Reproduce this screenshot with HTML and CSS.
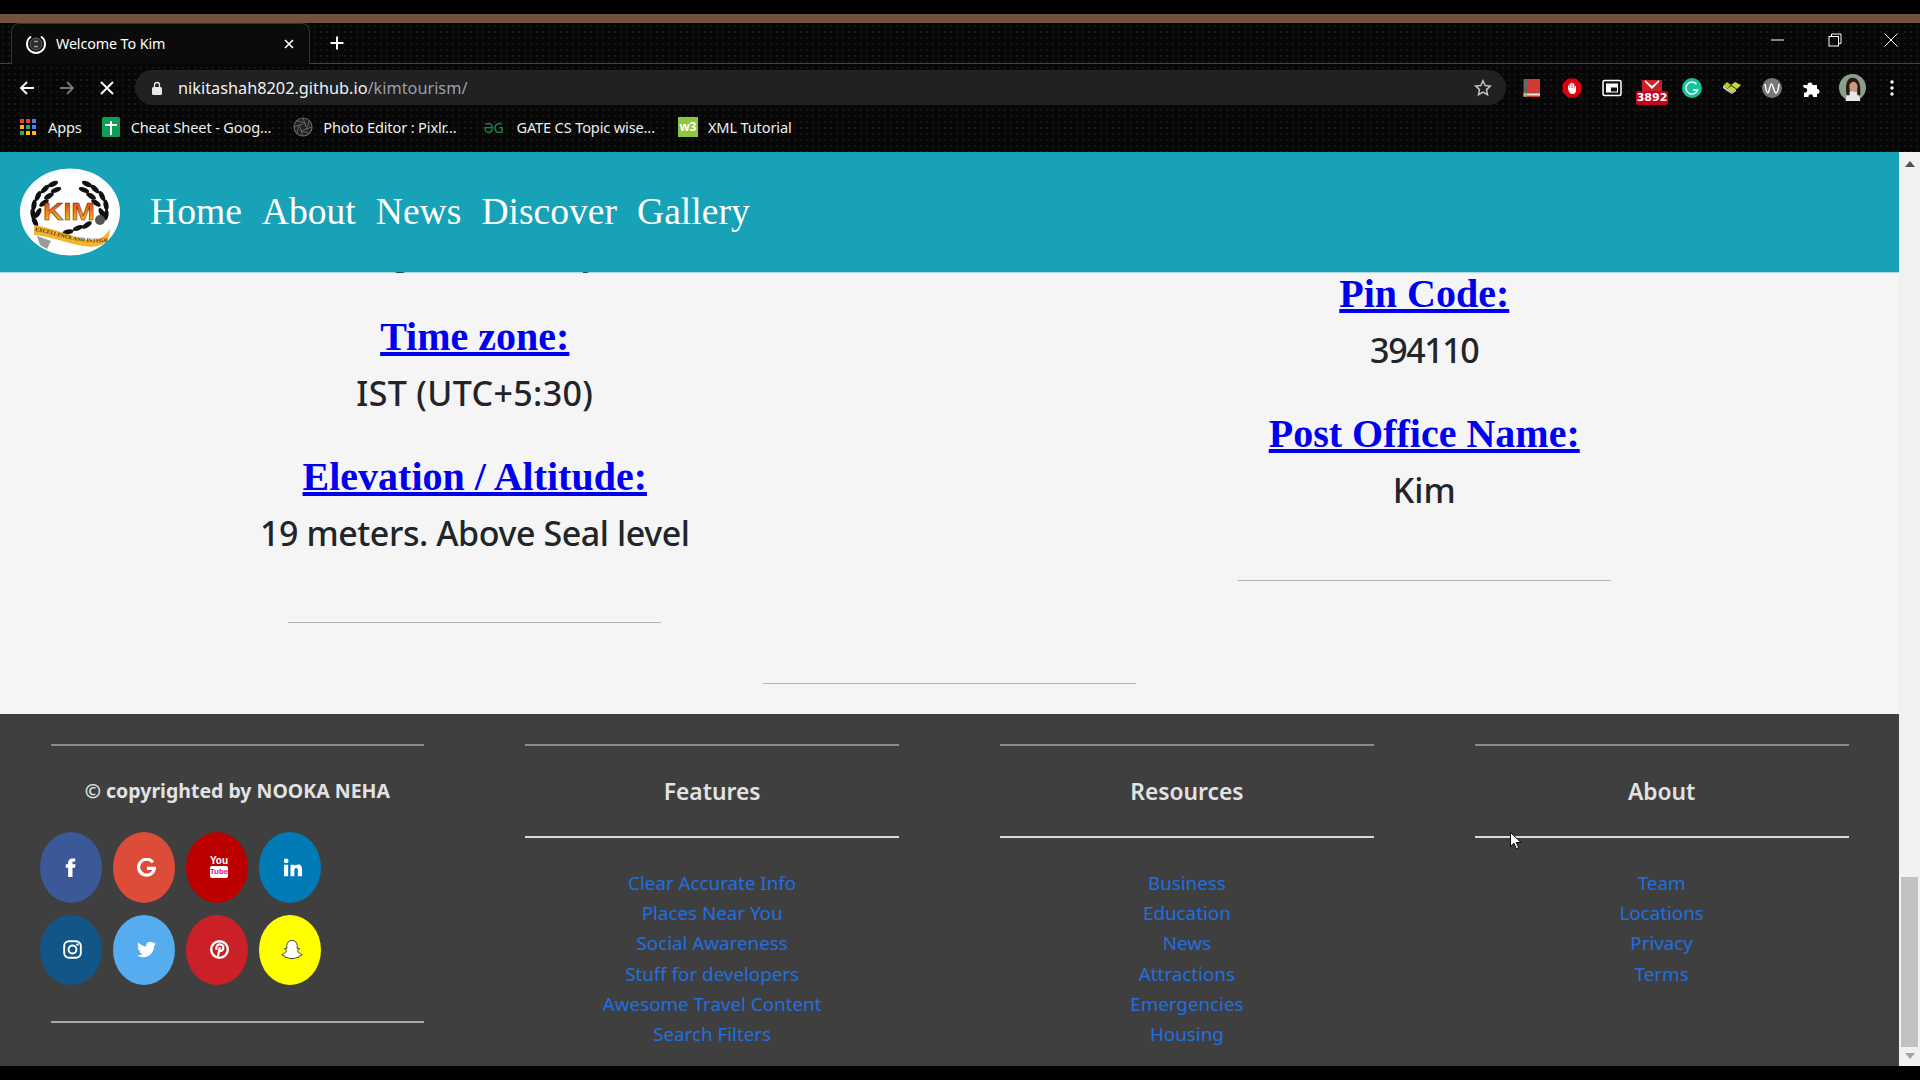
FILE: index.html
```html
<!DOCTYPE html>
<html lang="en">
<head>
<meta charset="utf-8">
<title>Welcome To Kim</title>
<link rel="stylesheet" href="styles.css">
</head>
<body>
<div class="edge"></div>
<div class="stripe"></div>
<header class="chrome">
  <div class="tabstrip">
    <div class="tab">
      <svg class="ic20" viewBox="0 0 20 20"><circle cx="10" cy="10" r="6" fill="#2c2c2c" stroke="#666" stroke-width="1"/><path d="M5 2.500A9 9 0 1 0 15 2.500" fill="none" stroke="#fff" stroke-width="2"/><path d="M8 7.500h4M8 12.500h4" stroke="#999" stroke-width="1.400"/></svg>
      <span class="tabtitle">Welcome To Kim</span>
      <svg class="tabclose" viewBox="0 0 12 12"><path d="M2 2l8 8M10 2l-8 8" stroke="#fff" stroke-width="1.600"/></svg>
    </div>
    <svg class="plus" viewBox="0 0 16 16"><path d="M8 1.500v13M1.500 8h13" stroke="#fff" stroke-width="2"/></svg>
    <div class="winctl">
      <svg class="win" viewBox="0 0 14 14"><path d="M0 7h13" stroke="#fff" stroke-width="1"/></svg>
      <svg class="win" viewBox="0 0 14 14"><path d="M3.500 3V1h9.500v9.500h-2.500" fill="none" stroke="#fff"/><rect x="1" y="3.500" width="9.500" height="9.500" fill="none" stroke="#fff"/></svg>
      <svg class="win" viewBox="0 0 14 14"><path d="M.5.5l13 13M13.500.5l-13 13" stroke="#fff"/></svg>
    </div>
  </div>
  <div class="toolbar">
    <svg class="navic" viewBox="0 0 18 18"><path d="M16 9H3M9 3L3 9l6 6" fill="none" stroke="#fff" stroke-width="1.800"/></svg>
    <svg class="navic" viewBox="0 0 18 18"><path d="M2 9h13M9 3l6 6-6 6" fill="none" stroke="#777" stroke-width="1.800"/></svg>
    <svg class="navic" viewBox="0 0 18 18"><path d="M3 3l12 12M15 3L3 15" stroke="#fff" stroke-width="1.900"/></svg>
    <div class="omnibox">
      <svg class="lock" viewBox="0 0 12 14"><rect x="1" y="6" width="10" height="8" rx="1.500" fill="#e8e8e8"/><path d="M3.500 6V4a2.500 2.500 0 0 1 5 0v2" fill="none" stroke="#e8e8e8" stroke-width="1.300"/></svg>
      <span class="host">nikitashah8202.github.io</span><span class="urlpath">/kimtourism/</span>
      <svg class="star" viewBox="0 0 18 18"><path d="M9 1.800l2.200 4.700 5.100.6-3.800 3.500 1 5.100L9 13.200 4.500 15.700l1-5.100L1.700 7.100l5.100-.6z" fill="none" stroke="#c4c4c4" stroke-width="1.500"/></svg>
    </div>
    <div class="exts">
      <span class="ext"><svg class="ic20" viewBox="0 0 20 20"><rect x="3" y="1" width="15" height="18" fill="#d23b33"/><rect x="1.500" y="1" width="4" height="18" fill="#666"/><rect x="5" y="15.500" width="13" height="2" fill="#eee"/><path d="M1.500 15h3v4l-1.500-1-1.500 1z" fill="#e2b93b"/></svg></span>
      <span class="ext"><svg class="ic20" viewBox="0 0 20 20"><path d="M6 1h8l5 5v8l-5 5H6l-5-5V6z" fill="#d90012" stroke="#d90012" stroke-linejoin="round"/><path d="M6 11V7.500h1.200V10h.4V5.500h1.300V10h.4V4.800h1.300V10h.4V5.500h1.300V10.500h.4V8h1.300v4.500c0 2-1.300 3.500-3.500 3.500-1.700 0-2.600-.8-3.300-2L6 11z" fill="#fff"/></svg></span>
      <span class="ext"><svg class="ic20" viewBox="0 0 20 20"><rect x="1" y="2.500" width="18" height="15" rx="1.500" fill="#111" stroke="#fff" stroke-width="1.500"/><rect x="4" y="5.500" width="12" height="9" fill="#fff"/><rect x="9" y="9.500" width="6" height="4" fill="#111"/></svg></span>
      <span class="ext gmail"><svg class="ic20" viewBox="0 0 20 20"><rect x="0" y="0" width="20" height="12" fill="#c9202a"/><path d="M3 0l7 6 7-6v2l-7 7-7-7z" fill="#fff"/></svg><span class="badge">3892</span></span>
      <span class="ext"><svg class="ic20" viewBox="0 0 20 20"><circle cx="10" cy="10" r="10" fill="#15c39a"/><path d="M14.500 6.200A6 6 0 1 0 15.600 12H11" fill="none" stroke="#fff" stroke-width="1.500"/></svg></span>
      <span class="ext"><svg class="ic20" viewBox="0 0 20 20"><path d="M1 8l4-4 4 3-4 4z" fill="#b6c73a"/><path d="M9 7l4-3 6 3-4 4z" fill="#c7d63a"/><path d="M5 11l4-3 5 3-4 4z" fill="#c7d63a"/><path d="M5 11v2l5 3 4-3v-2l-4 4zM1 8v2l4 3v-2z" fill="#ddd"/></svg></span>
      <span class="ext"><svg class="ic20" viewBox="0 0 20 20"><circle cx="10" cy="10" r="10" fill="#777"/><path d="M3 6c1 7 2 9 3 9s2-9 3.500-9S12 15 14 15s2.500-5 3-9" fill="none" stroke="#fff" stroke-width="1.500"/></svg></span>
      <span class="ext"><svg class="ic20" viewBox="0 0 20 20"><path d="M1 7h4.500a2.500 2.500 0 1 1 5 0H15v4a2.500 2.500 0 1 1 0 5v3H11a2.300 2.300 0 1 0-4.500 0H2v-4.500a2.400 2.400 0 1 0 0-4.500z" fill="#fff"/></svg></span>
      <span class="ext"><svg class="avatar" viewBox="0 0 28 28"><circle cx="14" cy="14" r="14" fill="#8aa08a"/><path d="M7 28c0-7 3-10 7-10s8 3 8 10z" fill="#e8e8e8"/><path d="M8 22C6 12 8 4 14 4s9 6 8 18h-3V11l-8-1v12z" fill="#2b1a14"/><ellipse cx="15" cy="13" rx="4" ry="5" fill="#c99a80"/></svg></span>
      <span class="ext"><svg class="dots" viewBox="0 0 4 16"><circle cx="2" cy="2" r="1.700" fill="#fff"/><circle cx="2" cy="8" r="1.700" fill="#fff"/><circle cx="2" cy="14" r="1.700" fill="#fff"/></svg></span>
    </div>
  </div>
  <div class="bookmarks">
    <a class="bm bm-apps"><svg class="ic18" viewBox="0 0 18 18"><g><rect x="1" y="1" width="4" height="4" fill="#ea4335"/><rect x="7" y="1" width="4" height="4" fill="#ea4335"/><rect x="13" y="1" width="4" height="4" fill="#4285f4"/><rect x="1" y="7" width="4" height="4" fill="#fbbc04"/><rect x="7" y="7" width="4" height="4" fill="#34a853"/><rect x="13" y="7" width="4" height="4" fill="#4285f4"/><rect x="1" y="13" width="4" height="4" fill="#34a853"/><rect x="7" y="13" width="4" height="4" fill="#fbbc04"/><rect x="13" y="13" width="4" height="4" fill="#fbbc04"/></g></svg><span>Apps</span></a>
    <a class="bm"><svg class="ic20" viewBox="0 0 20 20"><rect x="1" width="18" height="20" rx="1.500" fill="#0f9d58"/><path d="M10 4v14M4 8h12" stroke="#fff" stroke-width="2"/></svg><span>Cheat Sheet - Goog...</span></a>
    <a class="bm"><svg class="ic20" viewBox="0 0 20 20"><circle cx="10" cy="10" r="9" fill="#222" stroke="#666" stroke-width="1.200"/><path d="M10 1l3 9M19 10l-9 3M10 19l-3-9M1 10l9-3M3.600 3.600l9 3M16.400 3.600l-3 9M16.400 16.400l-9-3M3.600 16.400l3-9" stroke="#666"/></svg><span>Photo Editor : Pixlr...</span></a>
    <a class="bm bm-gg"><span class="gg">ƏG</span><span>GATE CS Topic wise...</span></a>
    <a class="bm bm-w3"><span class="w3">w3</span><span>XML Tutorial</span></a>
  </div>
</header>

<div class="viewport">
  <div class="page">
    <nav class="nav">
      <svg class="logo" viewBox="0 0 100 88">
        <defs>
          <linearGradient id="kimgrad" x1="0" y1="0" x2="0" y2="1"><stop offset="0" stop-color="#d8301a"/><stop offset=".55" stop-color="#f0881f"/><stop offset="1" stop-color="#f3d044"/></linearGradient>
          <path id="ribbonline" d="M15 63C35 66 55 76 86 74"/>
          <g id="leaf"><ellipse rx="5.500" ry="2.500" fill="#111"/></g>
        </defs>
        <ellipse cx="50" cy="44" rx="50" ry="43.500" fill="#fff"/>
        <ellipse cx="50" cy="44" rx="46" ry="40" fill="none" stroke="#cfe3ea" stroke-width=".5" stroke-dasharray="2 1"/>
        <g>
          <use href="#leaf" transform="translate(33 16) rotate(-25)"/><use href="#leaf" transform="translate(36 22) rotate(-20)"/><use href="#leaf" transform="translate(25 21) rotate(-45)"/><use href="#leaf" transform="translate(29 28) rotate(-30)"/><use href="#leaf" transform="translate(18 28) rotate(-65)"/><use href="#leaf" transform="translate(24 35) rotate(-35)"/><use href="#leaf" transform="translate(14 37) rotate(-80)"/><use href="#leaf" transform="translate(18 45) rotate(-60)"/><use href="#leaf" transform="translate(13 46) rotate(80)"/><use href="#leaf" transform="translate(15 54) rotate(65)"/>
          <use href="#leaf" transform="translate(67 16) rotate(25)"/><use href="#leaf" transform="translate(64 22) rotate(20)"/><use href="#leaf" transform="translate(75 21) rotate(45)"/><use href="#leaf" transform="translate(71 28) rotate(30)"/><use href="#leaf" transform="translate(82 28) rotate(65)"/><use href="#leaf" transform="translate(76 35) rotate(35)"/><use href="#leaf" transform="translate(86 37) rotate(80)"/><use href="#leaf" transform="translate(82 45) rotate(60)"/><use href="#leaf" transform="translate(86 47) rotate(-80)"/><use href="#leaf" transform="translate(58 60) rotate(-20)"/><use href="#leaf" transform="translate(67 57) rotate(-35)"/><use href="#leaf" transform="translate(48 64) rotate(-10)"/>
        </g>
        <circle cx="80" cy="52" r="5" fill="#555"/>
        <path d="M14 57C35 60 55 71 70 72c9 .5 17-4 20-12l-1 9c-4 9-14 11-26 9-17-3-33-10-49-11z" fill="#f0b52c"/>
        <path d="M17 68l14 5-4 8-7-4z" fill="#9a9a9a"/>
        <text class="logoribbon"><textPath href="#ribbonline">EXCELLENCE AND INTEGRITY</textPath></text>
        <text class="logokim" x="23" y="52" textLength="52" lengthAdjust="spacingAndGlyphs" fill="url(#kimgrad)" stroke="#5a2a08" stroke-width=".5">KIM</text>
      </svg>
      <ul class="navlinks">
        <li><a>Home</a></li>
        <li><a>About</a></li>
        <li><a>News</a></li>
        <li><a>Discover</a></li>
        <li><a>Gallery</a></li>
      </ul>
    </nav>

    <main class="main">
      <section class="facts">
        <div class="col">
          <p class="val val-clipped">Region Kim city</p>
          <div class="fact"><h2><a>Time zone:</a></h2><p class="val val-loose">IST (UTC+5:30)</p></div>
          <div class="fact"><h2><a>Elevation / Altitude:</a></h2><p class="val val-tight">19 meters. Above Seal level</p></div>
          <hr class="rule">
        </div>
        <div class="col col-right">
          <div class="fact"><h2><a>Pin Code:</a></h2><p class="val val-digits">394110</p></div>
          <div class="fact"><h2><a>Post Office Name:</a></h2><p class="val">Kim</p></div>
          <hr class="rule">
        </div>
      </section>
      <hr class="rule rule-center">
    </main>

    <footer class="footer">
      <div class="fcol">
        <hr class="frule">
        <h3 class="copy">© copyrighted by NOOKA NEHA</h3>
        <div class="socials">
          <a class="soc fb"><svg viewBox="0 0 24 24"><path d="M14.500 8V5.800c0-1 .5-1.300 1.300-1.300H18V.5h-3.500C10.800.5 9 2.800 9 5.800V8H6v4.300h3V24h5.500V12.300h3.300l.5-4.300z" fill="#fff"/></svg></a>
          <a class="soc gp"><svg viewBox="0 0 24 24"><path d="M20 5.500A10 10 0 1 0 22 13H12.500" fill="none" stroke="#fff" stroke-width="4"/></svg></a>
          <a class="soc yt"><span class="ytbox"><span class="you">You</span><span class="tube">Tube</span></span></a>
          <a class="soc li"><svg viewBox="0 0 24 24"><circle cx="4" cy="3.500" r="3" fill="#fff"/><rect x="1.200" y="8.500" width="5.300" height="14.500" fill="#fff"/><path d="M9.500 8.500h5v2c1-1.500 2.500-2.400 4.500-2.400 4 0 5 2.600 5 6.400V23h-5.300v-7.500c0-1.800-.4-3-2-3s-2.400 1.200-2.400 3V23H9.500z" fill="#fff"/></svg></a>
          <a class="soc ig"><svg viewBox="0 0 24 24"><rect x="1.500" y="1.500" width="21" height="21" rx="6" fill="none" stroke="#fff" stroke-width="2.400"/><circle cx="12" cy="12" r="5" fill="none" stroke="#fff" stroke-width="2.400"/><circle cx="18.300" cy="5.700" r="1.500" fill="#fff"/></svg></a>
          <a class="soc tw"><svg viewBox="0 0 24 24"><path d="M23.953 4.570a10 10 0 01-2.825.775 4.958 4.958 0 002.163-2.723c-.951.555-2.005.959-3.127 1.184a4.920 4.920 0 00-8.384 4.482C7.690 8.095 4.067 6.130 1.640 3.162a4.822 4.822 0 00-.666 2.475c0 1.710.870 3.213 2.188 4.096a4.904 4.904 0 01-2.228-.616v.060a4.923 4.923 0 003.946 4.827 4.996 4.996 0 01-2.212.085 4.936 4.936 0 004.604 3.417 9.867 9.867 0 01-6.102 2.105c-.390 0-.779-.023-1.170-.067a13.995 13.995 0 007.557 2.209c9.053 0 13.998-7.496 13.998-13.985 0-.210 0-.420-.015-.630A9.935 9.935 0 0024 4.590z" fill="#fff"/></svg></a>
          <a class="soc pi"><svg viewBox="0 0 24 24"><circle cx="12" cy="12" r="10.500" fill="none" stroke="#fff" stroke-width="3"/><path d="M8.500 12.500c-1.500-3.500 .5-7 4-7 3 0 4.800 2.200 4.300 5-.5 3-3.300 4.200-5.100 2.500M12.500 9L10 21" fill="none" stroke="#fff" stroke-width="2.800"/></svg></a>
          <a class="soc sc"><svg viewBox="0 0 24 24"><path d="M12 1.500c3.500 0 5.700 2.500 5.700 6v3l2-.5.500 1-2.200 1.500c.5 2 2.500 3.800 5 4.500-.3 1-1.800 1.300-3 1.500l-.5 1.500c-2.500-.4-3.800 1.500-7.500 1.500s-5-1.900-7.500-1.500l-.5-1.500c-1.200-.2-2.700-.5-3-1.500 2.500-.7 4.500-2.500 5-4.500L3.800 11l.5-1 2 .5v-3c0-3.500 2.200-6 5.700-6z" fill="#fff" stroke="#222" stroke-width=".9"/></svg></a>
        </div>
        <hr class="frule frule-end">
      </div>
      <div class="fcol">
        <hr class="frule">
        <h3 class="ftitle">Features</h3>
        <hr class="frule frule-bright">
        <ul class="flinks">
          <li><a>Clear Accurate Info</a></li>
          <li><a>Places Near You</a></li>
          <li><a>Social Awareness</a></li>
          <li><a>Stuff for developers</a></li>
          <li><a>Awesome Travel Content</a></li>
          <li><a>Search Filters</a></li>
        </ul>
      </div>
      <div class="fcol">
        <hr class="frule">
        <h3 class="ftitle">Resources</h3>
        <hr class="frule frule-bright">
        <ul class="flinks">
          <li><a>Business</a></li>
          <li><a>Education</a></li>
          <li><a>News</a></li>
          <li><a>Attractions</a></li>
          <li><a>Emergencies</a></li>
          <li><a>Housing</a></li>
        </ul>
      </div>
      <div class="fcol">
        <hr class="frule">
        <h3 class="ftitle">About</h3>
        <hr class="frule frule-bright">
        <ul class="flinks">
          <li><a>Team</a></li>
          <li><a>Locations</a></li>
          <li><a>Privacy</a></li>
          <li><a>Terms</a></li>
        </ul>
      </div>
    </footer>
  </div>
  <div class="scrollbar">
    <svg class="sbarrow sbarrow-up" viewBox="0 0 10 6"><path d="M5 0l5 6H0z" fill="#505050"/></svg>
    <div class="sbtrack"><div class="sbthumb"></div></div>
    <svg class="sbarrow sbarrow-down" viewBox="0 0 10 6"><path d="M5 6L0 0h10z" fill="#a3a3a3"/></svg>
  </div>
  <svg class="cursor" viewBox="0 0 12 18"><path d="M.5.5v14l3.500-3.200 2.300 5.500 2.300-1-2.300-5.300H11z" fill="#fff" stroke="#000" stroke-width=".9"/></svg>
</div>
<div class="edge"></div>
</body>
</html>
```
FILE: styles.css
```css
* { box-sizing: border-box; }
html, body { margin: 0; padding: 0; }
body {
  width: 1920px;
  height: 1080px;
  overflow: hidden;
  display: flex;
  flex-direction: column;
  background: #000;
  font-family: "Noto Sans", "Open Sans", sans-serif;
}
.edge { height: 14px; background: #000; flex: none; }
.stripe { height: 9px; background: #74503f; flex: none; }

/* Browser chrome */
.chrome {
  flex: none;
  height: 129px;
  color: #fff;
  background-color: #070707;
  background-image: radial-gradient(#171717 1px, transparent 1.4px);
  background-size: 6px 6px;
}
.tabstrip {
  height: 41px;
  display: flex;
  align-items: center;
  padding-left: 11px;
  border-bottom: 1px solid #444;
}
.tab {
  width: 299px;
  height: 41px;
  display: flex;
  align-items: center;
  gap: 10px;
  padding: 0 14px 0 14px;
  border: 1px solid #333;
  border-bottom: 0;
  border-radius: 8px 8px 0 0;
  background-color: #0b0b0b;
}
.tabtitle { flex: 1; font-size: 14.300px; letter-spacing: -.1px; }
.tabclose { width: 12px; height: 12px; }
.plus { width: 16px; height: 16px; margin-left: 19px; }
.winctl { margin-left: auto; display: flex; align-items: center; gap: 42px; padding-right: 22px; height: 30px; margin-top: -6px; }
.win { width: 14px; height: 14px; }
.win:first-child { margin-right: 1px; margin-left: -1px; }
.ic18 { width: 18px; height: 18px; flex: none; }
.ic20 { width: 20px; height: 20px; flex: none; }
.toolbar {
  height: 46px;
  display: flex;
  align-items: center;
  padding: 1px 12px 0 18px;
}
.navic { width: 18px; height: 18px; margin-right: 22px; flex: none; }
.omnibox {
  width: 1371px;
  margin-left: -3px;
  height: 35px;
  flex: none;
  border-radius: 18px;
  background: #1f2123;
  display: flex;
  align-items: center;
  padding: 0 14px 0 16px;
  font-size: 16.300px;
}
.lock { width: 12px; height: 14px; margin-right: 15px; }
.host { color: #f1f1f1; }
.urlpath { color: #9aa0a6; }
.star { width: 18px; height: 18px; margin-left: auto; }
.exts { display: flex; gap: 8px; margin-left: 10px; }
.ext { width: 32px; height: 32px; display: flex; align-items: center; justify-content: center; position: relative; }
.gmail .ic20 { margin-top: 5px; }
.badge {
  position: absolute;
  left: 0;
  top: 19px;
  width: 32px;
  height: 14px;
  border-radius: 2px;
  background: #c2041f;
  color: #fff;
  font: 700 11px/14px "DejaVu Sans", sans-serif;
  text-align: center;
}
.avatar { width: 27px; height: 27px; }
.dots { width: 4px; height: 16px; }
.bookmarks {
  height: 42px;
  display: flex;
  align-items: center;
  padding: 0 0 8px 19px;
  gap: 22px;
  font-size: 14.600px;
  letter-spacing: -.15px;
  color: #eee;
}
.bm { display: flex; align-items: center; gap: 10px; }
.bm-apps { gap: 11px; margin-right: -3px; }
.bm-gg { margin-left: 5px; }
.bm-w3 { margin-left: 1px; }
.gg { width: 23px; color: #1b8a4a; font-size: 14px; }
.w3 { width: 20px; height: 20px; background: #8dc63f; color: #fff; font-size: 12px; line-height: 20px; text-align: center; font-weight: 700; }

/* Page */
.viewport { flex: none; height: 914px; display: flex; position: relative; }
.page { width: 1899px; display: flex; flex-direction: column; }
.nav {
  flex: none;
  height: 120px;
  background: #17a2b8;
  display: flex;
  align-items: center;
  padding-left: 20px;
  gap: 30px;
  z-index: 1;
  box-shadow: 0 1px 1px rgba(23, 162, 184, .3);
}
.logo { width: 100px; height: 88px; flex: none; margin-top: -1px; }
.logokim { font: 900 24px "Liberation Sans", sans-serif; }
.logoribbon { font: 700 5.500px "Liberation Serif", serif; fill: #5a2a10; }
.navlinks { list-style: none; margin: -2px 0 0; padding: 0; display: flex; gap: 20px; font: 37.600px "Liberation Serif", serif; color: #fff; }
.main {
  flex: 1;
  min-height: 0;
  overflow: hidden;
  background: #f5f5f5;
  display: flex;
  flex-direction: column;
  justify-content: flex-end;
  padding-bottom: 30px;
}
.facts { flex: none; display: grid; grid-template-columns: 1fr 1fr; align-items: start; }
.col { text-align: center; }
.col-right { padding-top: 43px; }
.fact { margin-bottom: 37px; }
.fact h2 { margin: 0 0 9px; font: 700 40px/46px "Liberation Serif", serif; color: #0000ee; text-decoration: underline; }
.val { margin: 0; font-size: 34px; font-weight: 500; line-height: 48px; color: #212529; }
.val-clipped { margin-bottom: 38px; }
.val-tight { letter-spacing: -.42px; }
.val-loose { letter-spacing: .35px; }
.val-digits { letter-spacing: -1.400px; }
.rule { width: 373px; height: 1px; margin: 0 auto; border: 0; background: #b4b4b4; flex: none; }
.col .rule { margin-top: 65px; margin-bottom: 60px; }
.col-right .rule { margin-top: 66px; }
.rule-center { margin: 0 auto; }

/* Footer */
.footer {
  flex: none;
  height: 352px;
  background: #3f3f3f;
  display: grid;
  grid-template-columns: repeat(4, 1fr);
  padding-top: 30px;
}
.fcol { padding: 0 50.500px; text-align: center; color: #e2e2e2; }
.frule { height: 2px; margin: 0; border: 0; background: #8b8b8b; }
.frule-bright { background: #d8d8d8; }
.frule-end { background: #a8a8a8; margin-top: 36px; }
.ftitle, .copy { margin: 0; height: 90px; display: flex; align-items: center; justify-content: center; white-space: nowrap; }
.ftitle { font-size: 22.800px; font-weight: 600; }
.copy { height: 88px; font-size: 19.500px; font-weight: 700; margin-bottom: -2px; padding-top: 1px; }
.socials { display: grid; grid-template-columns: repeat(4, 62px); gap: 12px 11px; margin-left: -11px; width: 300px; }
.soc { height: 70.500px; border-radius: 50%; display: flex; align-items: center; justify-content: center; padding-left: 5px; }
.soc svg { width: 19px; height: 19px; }
.soc.sc svg { width: 22px; height: 22px; }
.fb { background: #3b5998; padding-left: 0; }
.gp { background: #dd4b39; }
.yt { background: #bb0000; }
.li { background: #007bb5; }
.ig { background: #125688; padding-left: 3px; }
.tw { background: #55acee; }
.pi { background: #cb2027; }
.sc { background: #ffff00; }
.ytbox { display: flex; flex-direction: column; align-items: center; width: 16px; font: 700 10px/10px "Liberation Sans Narrow", "Liberation Sans", sans-serif; }
.you { color: #fff; }
.tube { background: #fff; color: #d6168f; border-radius: 2px; padding: 1px 0; font-size: 8px; }
.flinks { list-style: none; margin: 0; padding: 30px 0 0; font-size: 18.800px; line-height: 30.200px; color: #1f6fe0; }

/* Scrollbar */
.scrollbar { width: 21px; background: #f1f1f1; display: flex; flex-direction: column; align-items: center; }
.sbarrow { width: 10px; height: 6px; flex: none; }
.sbarrow-up { margin: 9px 0 7px; }
.sbarrow-down { margin: 6px 0 7px; }
.sbtrack { flex: 1; width: 17px; display: flex; flex-direction: column; justify-content: flex-end; }
.sbthumb { height: 170px; background: #c1c1c1; }
.cursor { position: absolute; left: 1510px; top: 680px; width: 12px; height: 18px; }
```
